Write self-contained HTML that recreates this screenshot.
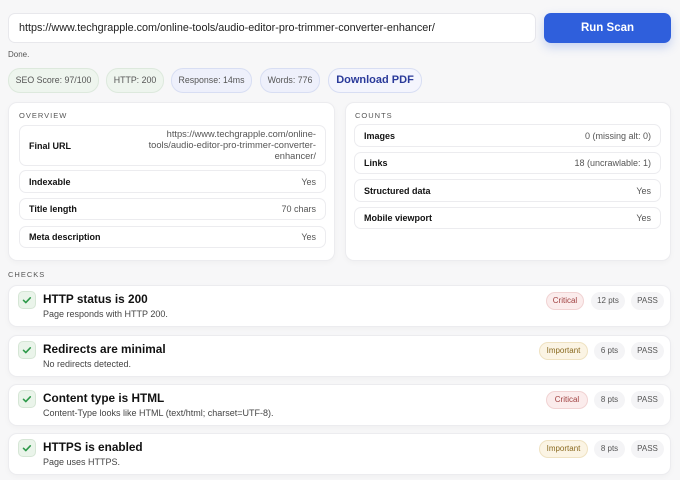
<!DOCTYPE html>
<html><head><style>
*{box-sizing:border-box;margin:0;padding:0}
body{width:680px;height:480px;overflow:hidden;background:#f7f7f8;font-family:"Liberation Sans",sans-serif;color:#111;position:relative}
.a{position:absolute}
.inp{left:8px;top:13px;width:528px;height:30px;background:#fff;border:1px solid #e8e8ec;border-radius:7px;font-size:10.8px;padding:8px 10px;color:#222}
.btn{left:544px;top:13px;width:127px;height:30px;background:#2f5fdc;border-radius:7px;color:#fff;font-weight:bold;font-size:11.5px;text-align:center;line-height:30px;box-shadow:0 4px 10px rgba(47,95,220,.25)}
.pill{top:68px;height:25px;border-radius:12px;font-size:8.8px;line-height:23px;text-align:center;color:#555;border:1px solid}
.g{background:#eef5ee;border-color:#dde9dd}
.b{background:#eef0fb;border-color:#d8def3}
.card{background:#fff;border:1px solid #ececef;border-radius:9px;box-shadow:0 2px 6px rgba(0,0,0,.03)}
.lab{font-size:7.5px;letter-spacing:1px;color:#555}
.row{position:absolute;background:#fff;border:1px solid #ececef;border-radius:7px;font-size:9px;display:flex;align-items:center;justify-content:space-between;padding:0 9px}
.row b{color:#111}.row span{color:#555;text-align:right}
.chk{left:8px;width:663px;height:42px}
.ic{position:absolute;left:9px;top:5px;width:18px;height:18px;background:#eaf4ea;border:1px solid #d6e6d6;border-radius:5px}
.t{position:absolute;left:34px;top:6px;font-size:11.8px;font-weight:bold}
.d{position:absolute;left:34px;top:23px;font-size:9px;color:#444}
.bd{position:absolute;top:6px;height:18px;border-radius:9px;font-size:8px;line-height:18px;text-align:center;color:#555;background:#f4f4f6}
.cr{background:#fbecec;color:#a04040;border:1px solid #f1d3d3;line-height:16px}
.im{background:#fbf4e4;color:#8a6a20;border:1px solid #efe2c2;line-height:16px}
</style></head><body>
<div class="a inp">https://www.techgrapple.com/online-tools/audio-editor-pro-trimmer-converter-enhancer/</div>
<div class="a btn">Run Scan</div>
<div class="a" style="left:8px;top:50px;font-size:8px;color:#555">Done.</div>
<div class="a pill g" style="left:8px;width:91px">SEO Score: 97/100</div>
<div class="a pill g" style="left:106px;width:58px">HTTP: 200</div>
<div class="a pill b" style="left:171px;width:81px">Response: 14ms</div>
<div class="a pill b" style="left:260px;width:60px">Words: 776</div>
<div class="a pill b" style="left:328px;width:94px;font-size:11px;font-weight:bold;color:#2a3a9a;background:#f4f5fd">Download PDF</div>

<div class="a card" style="left:8px;top:102px;width:327px;height:159px"></div>
<div class="a lab" style="left:19px;top:111px">OVERVIEW</div>
<div class="row" style="left:19px;top:125px;width:307px;height:41px"><b>Final URL</b><span style="font-size:9.3px;line-height:11px">https://www.techgrapple.com/online-<br>tools/audio-editor-pro-trimmer-converter-<br>enhancer/</span></div>
<div class="row" style="left:19px;top:170px;width:307px;height:23px"><b>Indexable</b><span>Yes</span></div>
<div class="row" style="left:19px;top:198px;width:307px;height:22px"><b>Title length</b><span>70 chars</span></div>
<div class="row" style="left:19px;top:226px;width:307px;height:22px"><b>Meta description</b><span>Yes</span></div>

<div class="a card" style="left:345px;top:102px;width:326px;height:159px"></div>
<div class="a lab" style="left:355px;top:111px">COUNTS</div>
<div class="row" style="left:354px;top:124px;width:307px;height:23px"><b>Images</b><span>0 (missing alt: 0)</span></div>
<div class="row" style="left:354px;top:152px;width:307px;height:22px"><b>Links</b><span>18 (uncrawlable: 1)</span></div>
<div class="row" style="left:354px;top:179px;width:307px;height:23px"><b>Structured data</b><span>Yes</span></div>
<div class="row" style="left:354px;top:207px;width:307px;height:22px"><b>Mobile viewport</b><span>Yes</span></div>

<div class="a lab" style="left:8px;top:270px">CHECKS</div>

<div class="a card chk" style="top:285px"><div class="ic"><svg width="16" height="16" viewBox="0 0 16 16"><path d="M4.5 8.3l2.3 2.3 4.5-4.8" fill="none" stroke="#2e9a4a" stroke-width="1.6" stroke-linecap="round" stroke-linejoin="round"/></svg></div><div class="t">HTTP status is 200</div><div class="d">Page responds with HTTP 200.</div>
<div class="bd cr" style="left:537px;width:38px">Critical</div><div class="bd" style="left:582px;width:34px">12 pts</div><div class="bd" style="left:622px;width:33px">PASS</div></div>
<div class="a card chk" style="top:335px"><div class="ic"><svg width="16" height="16" viewBox="0 0 16 16"><path d="M4.5 8.3l2.3 2.3 4.5-4.8" fill="none" stroke="#2e9a4a" stroke-width="1.6" stroke-linecap="round" stroke-linejoin="round"/></svg></div><div class="t">Redirects are minimal</div><div class="d">No redirects detected.</div>
<div class="bd im" style="left:530px;width:49px">Important</div><div class="bd" style="left:585px;width:31px">6 pts</div><div class="bd" style="left:622px;width:33px">PASS</div></div>
<div class="a card chk" style="top:384px"><div class="ic"><svg width="16" height="16" viewBox="0 0 16 16"><path d="M4.5 8.3l2.3 2.3 4.5-4.8" fill="none" stroke="#2e9a4a" stroke-width="1.6" stroke-linecap="round" stroke-linejoin="round"/></svg></div><div class="t">Content type is HTML</div><div class="d">Content-Type looks like HTML (text/html; charset=UTF-8).</div>
<div class="bd cr" style="left:537px;width:42px">Critical</div><div class="bd" style="left:585px;width:31px">8 pts</div><div class="bd" style="left:622px;width:33px">PASS</div></div>
<div class="a card chk" style="top:433px"><div class="ic"><svg width="16" height="16" viewBox="0 0 16 16"><path d="M4.5 8.3l2.3 2.3 4.5-4.8" fill="none" stroke="#2e9a4a" stroke-width="1.6" stroke-linecap="round" stroke-linejoin="round"/></svg></div><div class="t">HTTPS is enabled</div><div class="d">Page uses HTTPS.</div>
<div class="bd im" style="left:530px;width:49px">Important</div><div class="bd" style="left:585px;width:31px">8 pts</div><div class="bd" style="left:622px;width:33px">PASS</div></div>
</body></html>
